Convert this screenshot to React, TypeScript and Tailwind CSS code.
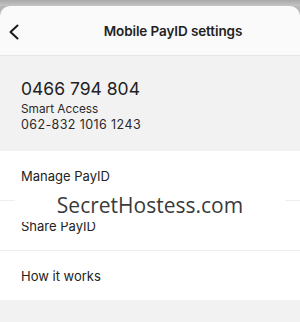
import React from "react";

export default function App() {
  const font = { fontFamily: "Inter, 'Noto Sans', sans-serif" };
  return (
    <div className="relative w-[300px] h-[322px] overflow-hidden bg-[#b8b8b8]" style={font}>
      <div className="h-[6px] bg-gradient-to-b from-[#a9a9a9] to-[#c4c4c4]" />
      <div className="flex flex-col rounded-t-[10px] bg-[#fafafa]">
        <div className="relative flex h-[50px] items-center justify-center border-b border-[#e6e6e6]">
          <svg className="absolute left-[8px] top-[18px]" width="12" height="16" viewBox="0 0 12 16" fill="none">
            <path d="M9.5 1.5L2.5 8L9.5 14.5" stroke="#1a1a1a" strokeWidth="2" strokeLinecap="round" strokeLinejoin="round" />
          </svg>
          <span className="pl-[46px] pt-[1px] text-[13.5px] font-semibold tracking-[-0.1px] text-[#222]">Mobile PayID settings</span>
        </div>
        <div className="flex h-[95px] flex-col bg-[#f2f2f2] pl-[21px] pt-[22px]">
          <span className="text-[17.5px] leading-[22px] text-[#222]">0466 794 804</span>
          <span className="mt-[2px] text-[11.8px] leading-[15px] text-[#2a2a2a]">Smart Access</span>
          <span className="text-[12.5px] leading-[16px] tracking-[0.4px] text-[#2a2a2a]">062-832 1016 1243</span>
        </div>
        <div className="flex flex-col bg-white">
          <div className="flex h-[50px] items-center border-b border-[#eeeeee] pl-[21px] pt-[2px] text-[13px] text-[#222]">Manage PayID</div>
          <div className="flex h-[50px] items-center border-b border-[#eeeeee] pl-[21px] pt-[2px] text-[13px] text-[#222]">Share PayID</div>
          <div className="flex h-[49px] items-center pl-[21px] pt-[2px] text-[13px] text-[#222]">How it works</div>
        </div>
        <div className="h-[30px] bg-[#f2f2f2]" />
      </div>
      <div
        className="absolute left-[15px] top-[189px] flex h-[33px] w-[270px] items-center justify-center bg-white text-[21px] text-[#3a3a3a]"
        style={{ fontFamily: "'Open Sans', sans-serif" }}
      >
        SecretHostess.com
      </div>
    </div>
  );
}
